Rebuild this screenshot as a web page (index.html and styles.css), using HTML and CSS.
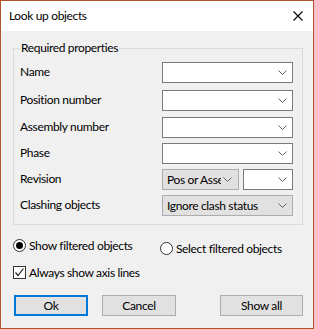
FILE: index.html
```html
<!DOCTYPE html>
<html>
<head>
<meta charset="utf-8">
<link rel="stylesheet" href="styles.css">
</head>
<body>
<div class="dialog">
  <div class="titlebar">
    <span class="title">Look up objects</span>
    <svg class="close" width="10" height="10" viewBox="0 0 10 10"><path d="M0.5 0.5 L9.5 9.5 M9.5 0.5 L0.5 9.5" stroke="#000" stroke-width="1.1" fill="none"/></svg>
  </div>
  <div class="content">
    <fieldset class="group">
      <legend>Required properties</legend>
      <div class="row r1"><span class="label">Name</span><div class="combo"><svg class="chev" width="9" height="5" viewBox="0 0 9 5"><path d="M0.5 0.5 L4.5 4.5 L8.5 0.5" stroke="#606060" stroke-width="1" fill="none"/></svg></div></div>
      <div class="row r2"><span class="label">Position number</span><div class="combo"><svg class="chev" width="9" height="5" viewBox="0 0 9 5"><path d="M0.5 0.5 L4.5 4.5 L8.5 0.5" stroke="#606060" stroke-width="1" fill="none"/></svg></div></div>
      <div class="row r3"><span class="label">Assembly number</span><div class="combo"><svg class="chev" width="9" height="5" viewBox="0 0 9 5"><path d="M0.5 0.5 L4.5 4.5 L8.5 0.5" stroke="#606060" stroke-width="1" fill="none"/></svg></div></div>
      <div class="row r4"><span class="label">Phase</span><div class="combo"><svg class="chev" width="9" height="5" viewBox="0 0 9 5"><path d="M0.5 0.5 L4.5 4.5 L8.5 0.5" stroke="#606060" stroke-width="1" fill="none"/></svg></div></div>
      <div class="row r4"><span class="label">Revision</span>
        <div class="pair">
          <div class="combo gray small"><span class="val">Pos or Assembly</span><svg class="chev" width="9" height="5" viewBox="0 0 9 5"><path d="M0.5 0.5 L4.5 4.5 L8.5 0.5" stroke="#606060" stroke-width="1" fill="none"/></svg></div>
          <div class="combo tiny"><svg class="chev" width="9" height="5" viewBox="0 0 9 5"><path d="M0.5 0.5 L4.5 4.5 L8.5 0.5" stroke="#606060" stroke-width="1" fill="none"/></svg></div>
        </div>
      </div>
      <div class="row r4"><span class="label">Clashing objects</span><div class="combo gray"><span class="val">Ignore clash status</span><svg class="chev" width="9" height="5" viewBox="0 0 9 5"><path d="M0.5 0.5 L4.5 4.5 L8.5 0.5" stroke="#606060" stroke-width="1" fill="none"/></svg></div></div>
    </fieldset>
    <div class="options">
      <div class="opt"><span class="radio checked"></span><span>Show filtered objects</span></div>
      <div class="opt second"><span class="radio"></span><span>Select filtered objects</span></div>
    </div>
    <div class="opt check-row"><span class="checkbox"><svg width="11" height="11" viewBox="0 0 11 11"><path d="M1.5 5.5 L4 8.5 L9.5 1.5" stroke="#222" stroke-width="1.2" fill="none"/></svg></span><span>Always show axis lines</span></div>
    <div class="buttons">
      <div class="btn default">Ok</div>
      <div class="btn cancel">Cancel</div>
      <div class="btn showall">Show all</div>
    </div>
  </div>
</div>
</body>
</html>
```
FILE: styles.css
```css
* { box-sizing: border-box; }
html, body { margin: 0; padding: 0; }
body {
  font-family: Lato, "Noto Sans", sans-serif;
  font-size: 12px;
  letter-spacing: -0.35px;
  color: #000;
  background: #f0f0f0;
}
.dialog {
  width: 314px;
  height: 329px;
  border: 1px solid #b4532a;
  background: #f0f0f0;
  display: flex;
  flex-direction: column;
}
.titlebar {
  height: 30px;
  background: #fff;
  display: flex;
  align-items: center;
  justify-content: space-between;
  padding: 0 10px 0 8px;
}
.title { line-height: 14px; }
.close { display: block; margin-top: -1px; }
.content {
  padding: 0 10px 0 12px;
}
.group {
  margin: 10px 0 0 0;
  border: 1px solid #dcdcdc;
  padding: 0 9px 8px 6px;
  height: 184px;
}
.group legend {
  padding: 0 1px;
  line-height: 14px;
}
.row {
  display: flex;
  justify-content: space-between;
  align-items: center;
  height: 21px;
}
.r1 { margin-top: 7px; }
.r2 { margin-top: 7px; }
.r3 { margin-top: 6px; }
.r4 { margin-top: 5px; }
.label { line-height: 14px; margin-top: -2px; white-space: nowrap; }
.combo {
  width: 131px;
  height: 21px;
  border: 1px solid #7a7a7a;
  background: #fff;
  display: flex;
  align-items: center;
  padding: 0 5px 0 4px;
  overflow: hidden;
}
.combo.gray { background: #e1e1e1; border-color: #adadad; }
.pair { display: flex; gap: 4px; }
.combo.small { width: 77px; padding-right: 6px; }
.combo.tiny { width: 50px; }
.val { white-space: nowrap; overflow: hidden; flex: 1; line-height: 14px; min-width: 0; }
.small .val { flex: none; width: 54px; }
.chev { display: block; margin-left: auto; flex: none; }
.options {
  display: grid;
  grid-template-columns: 147px auto;
  align-items: start;
  margin-top: 14px;
  height: 16px;
}
.opt {
  display: flex;
  align-items: center;
  gap: 3px;
  line-height: 14px;
  height: 13px;
  white-space: nowrap;
}
.second { margin-top: 3px; }
.radio {
  width: 13px;
  height: 13px;
  border-radius: 50%;
  border: 1px solid #333;
  background: #fff;
  display: inline-flex;
  align-items: center;
  justify-content: center;
  flex: none;
}
.radio.checked::after {
  content: "";
  width: 7px;
  height: 7px;
  border-radius: 50%;
  background: #000;
}
.check-row { margin-top: 11px; }
.checkbox {
  width: 13px;
  height: 13px;
  border: 1px solid #333;
  background: #fff;
  display: inline-flex;
  flex: none;
}
.checkbox svg { display: block; }
.buttons {
  display: flex;
  margin-top: 16px;
  padding-left: 1px;
}
.btn {
  height: 21px;
  background: #e1e1e1;
  border: 1px solid #adadad;
  display: flex;
  align-items: center;
  justify-content: center;
  line-height: 14px;
}
.btn.default { width: 74px; border: 2px solid #0078d7; }
.btn.cancel { width: 74px; margin-left: 14px; }
.btn.showall { width: 83px; margin-left: auto; }
```
